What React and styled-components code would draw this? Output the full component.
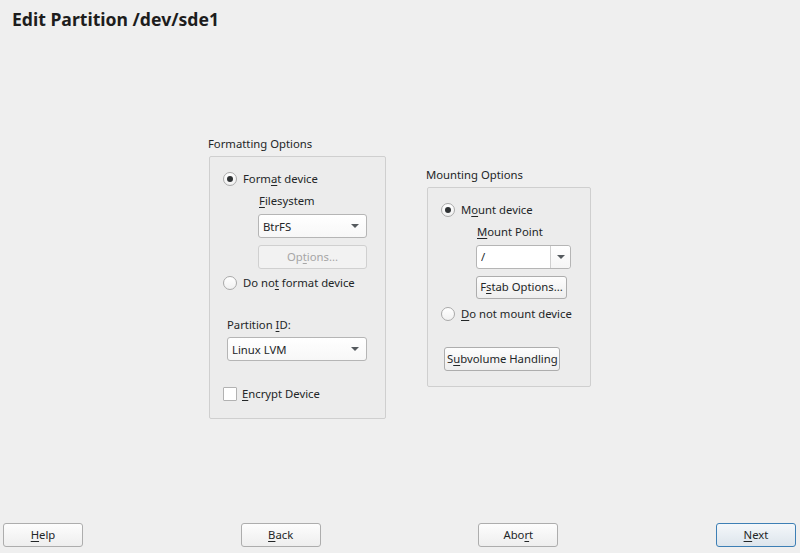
import React, { useState } from "react";
import styled, { createGlobalStyle } from "styled-components";

const GlobalStyle = createGlobalStyle`
  html, body {
    margin: 0;
    padding: 0;
    background: #efefef;
  }
  body {
    font-family: "Noto Sans", "Open Sans", "DejaVu Sans", sans-serif;
    font-size: 11.3px;
    color: #232627;
  }
  u {
    text-decoration-thickness: 1px;
    text-underline-offset: 2px;
  }
`;

const Page = styled.div`
  width: 800px;
  height: 553px;
  display: flex;
  flex-direction: column;
  background: #efefef;
  overflow: hidden;
`;

const Header = styled.div`
  height: 32px;
  padding: 6px 0 0 12px;
  box-sizing: border-box;
  font-size: 17.6px;
  font-weight: 700;
  color: #1d1d1d;
  line-height: 26px;
`;

const Main = styled.div`
  flex: 1;
  display: flex;
  align-items: center;
  justify-content: center;
  gap: 41px;
`;

const Group = styled.div`
  display: flex;
  flex-direction: column;
  margin-bottom: ${(p) => p.$lift || 0}px;
`;

const GroupTitle = styled.div`
  height: 16px;
  line-height: 16px;
  margin-bottom: 4px;
  margin-left: -1px;
`;

const GroupBox = styled.div`
  box-sizing: border-box;
  width: ${(p) => p.$width}px;
  border: 1px solid #cfcfcf;
  border-radius: 2px;
  background: #ececec;
  padding: ${(p) => p.$pad};
  display: flex;
  flex-direction: column;
  align-items: flex-start;
`;

const Row = styled.label`
  display: flex;
  align-items: center;
  height: 16px;
  line-height: 16px;
  margin-top: ${(p) => p.$top || 0}px;
  margin-left: ${(p) => p.$left || 0}px;
  white-space: nowrap;
`;

const RadioDot = styled.span`
  box-sizing: border-box;
  width: 14px;
  height: 14px;
  border-radius: 50%;
  border: 1px solid #a9a9a9;
  background: linear-gradient(#ffffff, #f1f1f1);
  margin-right: 6px;
  display: flex;
  align-items: center;
  justify-content: center;
  flex-shrink: 0;

  &::after {
    content: "";
    width: 6px;
    height: 6px;
    border-radius: 50%;
    background: ${(p) => (p.$on ? "#2f3234" : "transparent")};
  }
`;

const CheckBox = styled.span`
  box-sizing: border-box;
  width: 14px;
  height: 14px;
  border: 1px solid #b2b2b2;
  border-radius: 1px;
  background: #ffffff;
  margin-right: 5px;
  flex-shrink: 0;
`;

const FieldLabel = styled.div`
  height: 16px;
  line-height: 16px;
  margin-top: ${(p) => p.$top || 0}px;
  margin-left: ${(p) => p.$left || 0}px;
`;

const Combo = styled.div`
  box-sizing: border-box;
  width: ${(p) => p.$width}px;
  height: 24px;
  margin-top: ${(p) => p.$top || 0}px;
  margin-left: ${(p) => p.$left || 0}px;
  border: 1px solid #b5b5b5;
  border-radius: 3px;
  background: linear-gradient(#ffffff, #f7f7f7);
  display: flex;
  align-items: center;
  padding-left: 4px;
`;

const ComboText = styled.span`
  flex: 1;
`;

const Arrow = styled.span`
  width: 0;
  height: 0;
  border-left: 4px solid transparent;
  border-right: 4px solid transparent;
  border-top: 4px solid #555a5e;
  margin-right: ${(p) => (p.$flush ? 0 : 7)}px;
`;

const EditCombo = styled.div`
  box-sizing: border-box;
  width: ${(p) => p.$width}px;
  height: 24px;
  margin-top: ${(p) => p.$top || 0}px;
  margin-left: ${(p) => p.$left || 0}px;
  border: 1px solid #b5b5b5;
  border-radius: 3px;
  background: #ffffff;
  display: flex;
  align-items: stretch;
`;

const EditInput = styled.input`
  flex: 1;
  min-width: 0;
  border: none;
  outline: none;
  background: transparent;
  padding: 0 4px;
  font: inherit;
  color: inherit;
`;

const EditArrow = styled.span`
  width: 19px;
  border-left: 1px solid #cfcfcf;
  display: flex;
  align-items: center;
  justify-content: center;
  background: linear-gradient(#ffffff, #f5f5f5);
  border-radius: 0 3px 3px 0;
`;

const Button = styled.button`
  box-sizing: border-box;
  width: ${(p) => (p.$width ? `${p.$width}px` : "auto")};
  height: ${(p) => p.$height || 24}px;
  margin-top: ${(p) => p.$top || 0}px;
  margin-left: ${(p) => p.$left || 0}px;
  padding: 0 2px;
  font: inherit;
  color: ${(p) => (p.disabled ? "#a6a6a6" : "#232627")};
  border: 1px solid ${(p) => (p.$default ? "#3d7fb5" : p.disabled ? "#d0d0d0" : "#adadad")};
  border-radius: 3px;
  background: ${(p) =>
    p.$default
      ? "linear-gradient(#f4f7fa, #dde5ec)"
      : p.disabled
      ? "#f2f2f2"
      : "linear-gradient(#fdfdfd, #eeeeee)"};
  white-space: nowrap;
  line-height: 16px;
`;

const Footer = styled.div`
  height: 30px;
  display: flex;
  justify-content: space-between;
  align-items: flex-start;
  padding: 0 4px 0 3px;
`;

const Ul = ({ children }) => <u>{children}</u>;

export default function App() {
  const [format, setFormat] = useState(true);
  const [mount, setMount] = useState(true);
  const [encrypt, setEncrypt] = useState(false);

  return (
    <>
      <GlobalStyle />
      <Page>
        <Header>Edit Partition /dev/sde1</Header>
        <Main>
          <Group>
            <GroupTitle>Formatting Options</GroupTitle>
            <GroupBox $width={177} $pad="14px 13px 16px 13px">
              <Row onClick={() => setFormat(true)}>
                <RadioDot $on={format} />
                <span>
                  Form<Ul>a</Ul>t device
                </span>
              </Row>
              <FieldLabel $top={6} $left={36}>
                <Ul>F</Ul>ilesystem
              </FieldLabel>
              <Combo $width={109} $top={5} $left={35}>
                <ComboText>BtrFS</ComboText>
                <Arrow />
              </Combo>
              <Button $width={109} $top={7} $left={35} disabled>
                Op<Ul>t</Ul>ions...
              </Button>
              <Row $top={6} onClick={() => setFormat(false)}>
                <RadioDot $on={!format} />
                <span>
                  Do no<Ul>t</Ul> format device
                </span>
              </Row>
              <FieldLabel $top={26} $left={4}>
                Partition <Ul>I</Ul>D:
              </FieldLabel>
              <Combo $width={140} $top={4} $left={4}>
                <ComboText>Linux LVM</ComboText>
                <Arrow />
              </Combo>
              <Row $top={25} onClick={() => setEncrypt(!encrypt)}>
                <CheckBox />
                <span>
                  <Ul>E</Ul>ncrypt Device
                </span>
              </Row>
            </GroupBox>
          </Group>

          <Group $lift={2}>
            <GroupTitle>Mounting Options</GroupTitle>
            <GroupBox $width={164} $pad="14px 13px 15px 13px">
              <Row onClick={() => setMount(true)}>
                <RadioDot $on={mount} />
                <span>
                  M<Ul>o</Ul>unt device
                </span>
              </Row>
              <FieldLabel $top={6} $left={36}>
                <Ul>M</Ul>ount Point
              </FieldLabel>
              <EditCombo $width={95} $top={5} $left={35}>
                <EditInput defaultValue="/" />
                <EditArrow>
                  <Arrow $flush />
                </EditArrow>
              </EditCombo>
              <Button $width={91} $height={23} $top={7} $left={35}>
                F<Ul>s</Ul>tab Options...
              </Button>
              <Row $top={7} onClick={() => setMount(false)}>
                <RadioDot $on={!mount} />
                <span>
                  <Ul>D</Ul>o not mount device
                </span>
              </Row>
              <Button $width={116} $height={24} $top={25} $left={3}>
                S<Ul>u</Ul>bvolume Handling
              </Button>
            </GroupBox>
          </Group>
        </Main>
        <Footer>
          <Button $width={80}>
            <Ul>H</Ul>elp
          </Button>
          <Button $width={80}>
            <Ul>B</Ul>ack
          </Button>
          <Button $width={80}>
            Abo<Ul>r</Ul>t
          </Button>
          <Button $width={80} $default>
            <Ul>N</Ul>ext
          </Button>
        </Footer>
      </Page>
    </>
  );
}
